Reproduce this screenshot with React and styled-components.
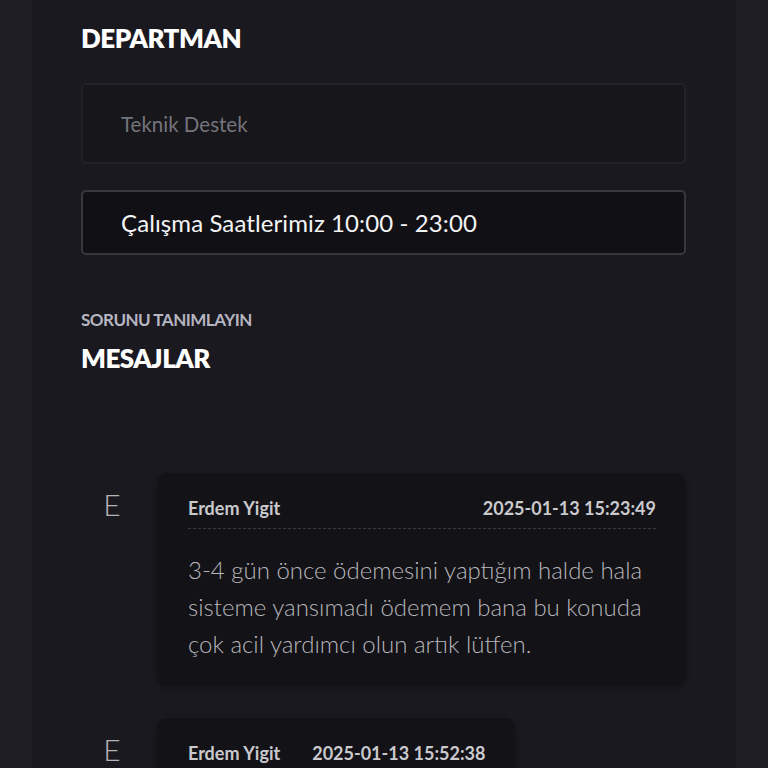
import React from 'react'
import styled, { createGlobalStyle } from 'styled-components'

const GlobalStyle = createGlobalStyle`
  body {
    margin: 0;
    background: #1f1e27;
    font-family: 'Lato', 'Open Sans', sans-serif;
  }
`

const messages = [
  {
    id: 1,
    initial: 'E',
    name: 'Erdem Yigit',
    date: '2025-01-13 15:23:49',
    text: '3-4 gün önce ödemesini yaptığım halde hala sisteme yansımadı ödemem bana bu konuda çok acil yardımcı olun artık lütfen.',
  },
  {
    id: 2,
    initial: 'E',
    name: 'Erdem Yigit',
    date: '2025-01-13 15:52:38',
    text: '',
  },
]

export default function App() {
  return (
    <>
      <GlobalStyle />
      <Panel>
        <Heading>DEPARTMAN</Heading>
        <Field>Teknik Destek</Field>
        <Notice>Çalışma Saatlerimiz 10:00 - 23:00</Notice>
        <Label>SORUNU TANIMLAYIN</Label>
        <Heading $tight>MESAJLAR</Heading>
        <Thread>
          {messages.map(m => (
            <Row key={m.id}>
              <Avatar>{m.initial}</Avatar>
              <Card>
                <CardHead $divided={!!m.text}>
                  <Name>{m.name}</Name>
                  <Stamp>{m.date}</Stamp>
                </CardHead>
                {m.text && <Body>{m.text}</Body>}
              </Card>
            </Row>
          ))}
        </Thread>
      </Panel>
    </>
  )
}

const Panel = styled.div`
  margin: 0 32px;
  min-height: 768px;
  background: #1a191f;
  padding: 22px 50px 0 49px;
  box-sizing: border-box;
`

const Heading = styled.h2`
  margin: 0;
  color: #ffffff;
  font-size: 26px;
  font-weight: 800;
  line-height: 32px;
  letter-spacing: -0.5px;
  margin-bottom: ${p => (p.$tight ? '0' : '29px')};
`

const Field = styled.div`
  height: 81px;
  box-sizing: border-box;
  border: 2px solid #232229;
  border-radius: 5px;
  background: #17161b;
  display: flex;
  align-items: center;
  padding-left: 38px;
  color: #75747b;
  font-size: 20.5px;
`

const Notice = styled.div`
  margin-top: 26px;
  height: 65px;
  box-sizing: border-box;
  border: 2px solid #38373e;
  border-radius: 5px;
  background: #111014;
  display: flex;
  align-items: center;
  padding-left: 38px;
  color: #f4f4f6;
  font-size: 24px;
  letter-spacing: 0.1px;
`

const Label = styled.div`
  margin-top: 55px;
  color: #b6b5c2;
  font-size: 17px;
  font-weight: 700;
  line-height: 20px;
  letter-spacing: -0.5px;
  margin-bottom: 12px;
`

const Thread = styled.div`
  padding-top: 99px;
  display: flex;
  flex-direction: column;
  gap: 32px;
`

const Row = styled.div`
  display: flex;
  align-items: flex-start;
`

const Avatar = styled.div`
  width: 62px;
  flex-shrink: 0;
  padding-top: 16px;
  box-sizing: border-box;
  text-align: center;
  color: #b4b3b9;
  font-size: 30px;
  font-weight: 300;
  line-height: 30px;
`

const Card = styled.div`
  margin-left: 14px;
  max-width: 529px;
  box-sizing: border-box;
  background: #131216;
  border-radius: 10px;
  padding: 24px 30px 24px 31px;
  box-shadow: 0 2px 6px rgba(0, 0, 0, 0.25);
`

const CardHead = styled.div`
  display: flex;
  justify-content: space-between;
  gap: 32px;
  padding-bottom: ${p => (p.$divided ? '9px' : '0')};
  border-bottom: ${p => (p.$divided ? '1px dashed #3a393f' : 'none')};
`

const Name = styled.span`
  color: #cac9ce;
  font-size: 18px;
  font-weight: 700;
  line-height: 22px;
`

const Stamp = styled.span`
  color: #cac9ce;
  font-size: 18px;
  font-weight: 700;
  line-height: 22px;
`

const Body = styled.p`
  margin: 22px 0 0;
  color: #b7b6bc;
  font-size: 24px;
  font-weight: 300;
  line-height: 37px;
`
